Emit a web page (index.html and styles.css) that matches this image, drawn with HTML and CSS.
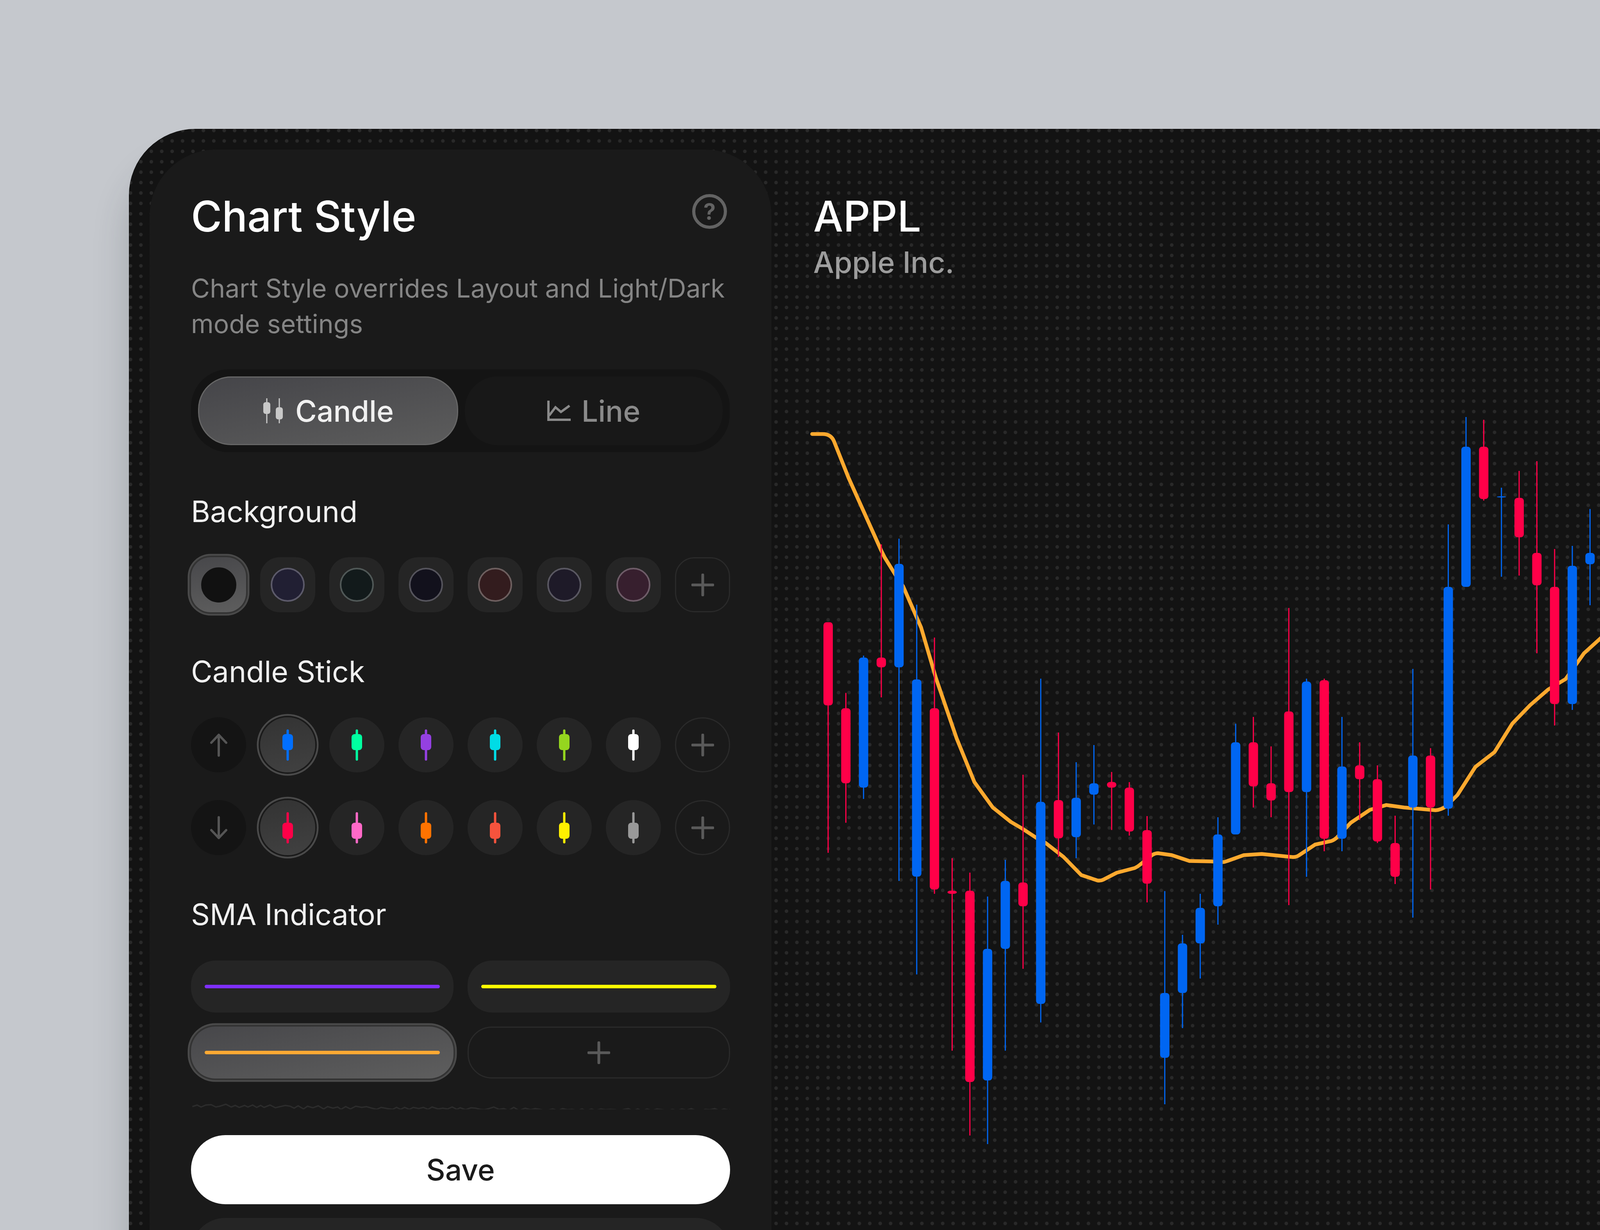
FILE: index.html
```html
<!DOCTYPE html>
<html lang="en">
<head>
<meta charset="utf-8">
<title>Chart Style</title>
<link rel="stylesheet" href="styles.css">
</head>
<body>
<div class="page">
<main class="window">
  <svg class="chart" viewBox="330 330 3870 2820" aria-hidden="true">
    <path class="sma" d="M2079 1111.5H2106C2120 1111.5 2130 1118 2135 1130L2172 1223L2256 1410L2265 1428L2291 1470L2312 1501.6L2358 1607L2396 1736.6L2449 1891L2494.5 2003L2541.6 2068L2588 2105L2617 2122L2652 2145L2677 2159L2722.6 2194.5L2768 2241L2810 2255Q2818 2256 2824 2253L2859 2235L2905 2223Q2912 2220 2919 2214L2950.5 2189Q2958 2185 2964.6 2185L2999.7 2190L3045 2205L3100 2206L3128 2208Q3135 2208 3142 2205L3184 2190L3230 2187L3310 2195Q3318 2195 3324.5 2191L3366.6 2163L3408.7 2153.6Q3416 2151 3422.7 2144.6L3458 2107L3507 2074L3549 2061.6L3594.6 2068L3675 2075Q3690 2074 3703 2064L3731 2036L3777 1964L3826 1926L3871.6 1853L3917 1806L3963 1766L4008 1739L4038 1697L4055 1673L4097 1635L4137 1597Q4146 1589 4155 1588L4186 1590Q4194 1592 4200 1598"/>
    <path class="wick-dn" d="M2120 1806V2184M2165.4 1774.5V2107M2256.1 1394V1786M2392.2 1632.8V2289M2437.5 2197.7V2690.7M2482.9 2234.7V2908M2619 1984V2481M2709.7 1876V2194.5M2845.8 1977V2125.6M2891.1 2003V2140M2936.5 2090V2311M3208.6 1836V2068M3254 1911.6V2093M3299.4 1557V2318M3390.1 1738V2180M3480.8 1901V2100M3526.2 1960V2159M3571.5 2089V2264M3662.2 1916V2278M3798.3 1075V1282M3889 1206V1474M3934.4 1181V1673M3979.8 1406V1858M4115.8 1402V1550M4161.2 1445V1688"/>
    <path class="wick-up" d="M2210.7 1679V2046M2301.4 1379.5V2256M2346.8 1548.6V2495.5M2528.2 2296V2930M2573.6 2202V2690.7M2664.3 1738V2618.6M2755 1952V2198M2800.4 1908V2111.6M2981.8 2282V2828M3027.2 2394V2633M3072.6 2289V2506M3117.9 2093V2368M3163.3 1853.6V1901M3344.7 1738V2245.5M3435.4 1836V2180M3616.9 1713V2350M3707.6 1343V2089M3753 1068V1144M3843.7 1249V1477M4025.1 1398V1818M4070.5 1303.6V1550"/>
    <g class="bodies-dn">
      <rect x="2108" y="1593.5" height="213"/><rect x="2153.4" y="1813.7" height="192.3"/><rect x="2244.1" y="1684" height="25"/><rect x="2380.2" y="1813.7" height="464.3"/><rect x="2425.5" y="2281" height="8"/><rect x="2470.9" y="2281" height="490"/><rect x="2607" y="2260" height="61"/><rect x="2697.7" y="2049" height="98"/><rect x="2833.8" y="2002.5" height="14.5"/><rect x="2879.1" y="2017" height="112.5"/><rect x="2924.5" y="2126" height="137"/><rect x="3196.6" y="1901" height="113"/><rect x="3242" y="2006" height="44"/><rect x="3287.4" y="1822" height="206.6"/><rect x="3378.1" y="1742" height="406"/><rect x="3468.8" y="1960" height="35.5"/><rect x="3514.2" y="1995.5" height="159.5"/><rect x="3559.5" y="2159" height="86.5"/><rect x="3650.2" y="1935" height="133"/><rect x="3786.3" y="1144" height="134"/><rect x="3877" y="1275" height="101"/><rect x="3922.4" y="1416" height="83"/><rect x="3967.8" y="1503" height="300"/><rect x="4103.8" y="1416" height="76"/><rect x="4149.2" y="1488" height="40"/><rect x="4194.6" y="1529" height="85"/>
    </g>
    <g class="bodies-up">
      <rect x="2198.7" y="1684" height="333"/><rect x="2289.4" y="1444" height="265"/><rect x="2334.8" y="1740" height="505"/><rect x="2516.2" y="2430" height="337"/><rect x="2561.6" y="2256" height="174"/><rect x="2652.3" y="2053.6" height="517.4"/><rect x="2743" y="2043" height="101"/><rect x="2788.4" y="2006" height="29"/><rect x="2969.8" y="2543" height="166"/><rect x="3015.2" y="2416" height="127"/><rect x="3060.6" y="2325" height="91"/><rect x="3105.9" y="2137" height="184"/><rect x="3151.3" y="1901" height="236"/><rect x="3332.7" y="1745.5" height="283"/><rect x="3423.4" y="1963" height="185"/><rect x="3604.9" y="1935" height="133"/><rect x="3695.6" y="1503" height="568"/><rect x="3741" y="1144" height="359"/><rect x="3831.7" y="1271" height="3"/><rect x="4013.1" y="1449" height="354"/><rect x="4058.5" y="1416" height="29"/>
    </g>
  </svg>

  <section class="panel">
    <header class="panel-head">
      <h1 class="title">Chart Style</h1>
      <span class="help">?</span>
    </header>
    <p class="desc">Chart Style overrides Layout and Light/Dark mode settings</p>

    <div class="segment">
      <div class="seg seg-on">
        <svg class="seg-candle" viewBox="0 0 56 64"><path d="M11 0V64M43 0V64"/><rect x="2" y="10" width="18" height="30" rx="6"/><rect x="34" y="23" width="18" height="31" rx="6"/></svg>
        <span>Candle</span>
      </div>
      <div class="seg seg-off">
        <svg class="seg-line" viewBox="0 0 60 52"><path d="M3 0V49H60M5 38L21 17L35 29L57 13"/></svg>
        <span>Line</span>
      </div>
    </div>

    <h2 class="label">Background</h2>
    <div class="row row-first">
      <div class="tile rounded selected-bg"><span class="swatch s0"></span></div>
      <div class="tile rounded"><span class="swatch s1"></span></div>
      <div class="tile rounded"><span class="swatch s2"></span></div>
      <div class="tile rounded"><span class="swatch s3"></span></div>
      <div class="tile rounded"><span class="swatch s4"></span></div>
      <div class="tile rounded"><span class="swatch s5"></span></div>
      <div class="tile rounded"><span class="swatch s6"></span></div>
      <div class="tile rounded add"><svg class="plus" viewBox="0 0 58 58"><path d="M29 3V55M3 29H55"/></svg></div>
    </div>

    <h2 class="label">Candle Stick</h2>
    <div class="row row-first">
      <div class="tile round dark"><svg class="arrow" viewBox="0 0 44 60"><path d="M22 4V57M3 24L22 4L41 24"/></svg></div>
      <div class="tile round selected-c"><svg class="stick c-blue" viewBox="0 0 27 80"><rect x="10.5" width="6" height="80" rx="3"/><rect y="12" width="27" height="41" rx="8"/></svg></div>
      <div class="tile round"><svg class="stick c-mint" viewBox="0 0 27 80"><rect x="10.5" width="6" height="80" rx="3"/><rect y="12" width="27" height="41" rx="8"/></svg></div>
      <div class="tile round"><svg class="stick c-violet" viewBox="0 0 27 80"><rect x="10.5" width="6" height="80" rx="3"/><rect y="12" width="27" height="41" rx="8"/></svg></div>
      <div class="tile round"><svg class="stick c-cyan" viewBox="0 0 27 80"><rect x="10.5" width="6" height="80" rx="3"/><rect y="12" width="27" height="41" rx="8"/></svg></div>
      <div class="tile round"><svg class="stick c-lime" viewBox="0 0 27 80"><rect x="10.5" width="6" height="80" rx="3"/><rect y="12" width="27" height="41" rx="8"/></svg></div>
      <div class="tile round"><svg class="stick c-white" viewBox="0 0 27 80"><rect x="10.5" width="6" height="80" rx="3"/><rect y="12" width="27" height="41" rx="8"/></svg></div>
      <div class="tile round add"><svg class="plus" viewBox="0 0 58 58"><path d="M29 3V55M3 29H55"/></svg></div>
    </div>
    <div class="row row-next">
      <div class="tile round dark"><svg class="arrow" viewBox="0 0 44 60"><path d="M22 3V56M3 36L22 56L41 36"/></svg></div>
      <div class="tile round selected-c"><svg class="stick c-red" viewBox="0 0 27 80"><rect x="10.5" width="6" height="80" rx="3"/><rect y="27" width="27" height="41" rx="8"/></svg></div>
      <div class="tile round"><svg class="stick c-pink" viewBox="0 0 27 80"><rect x="10.5" width="6" height="80" rx="3"/><rect y="27" width="27" height="41" rx="8"/></svg></div>
      <div class="tile round"><svg class="stick c-orange" viewBox="0 0 27 80"><rect x="10.5" width="6" height="80" rx="3"/><rect y="27" width="27" height="41" rx="8"/></svg></div>
      <div class="tile round"><svg class="stick c-coral" viewBox="0 0 27 80"><rect x="10.5" width="6" height="80" rx="3"/><rect y="27" width="27" height="41" rx="8"/></svg></div>
      <div class="tile round"><svg class="stick c-yellow" viewBox="0 0 27 80"><rect x="10.5" width="6" height="80" rx="3"/><rect y="27" width="27" height="41" rx="8"/></svg></div>
      <div class="tile round"><svg class="stick c-gray" viewBox="0 0 27 80"><rect x="10.5" width="6" height="80" rx="3"/><rect y="27" width="27" height="41" rx="8"/></svg></div>
      <div class="tile round add"><svg class="plus" viewBox="0 0 58 58"><path d="M29 3V55M3 29H55"/></svg></div>
    </div>

    <h2 class="label">SMA Indicator</h2>
    <div class="sma-grid">
      <div class="sma-tile"><span class="sma-line l-violet"></span></div>
      <div class="sma-tile"><span class="sma-line l-yellow"></span></div>
      <div class="sma-tile sma-on"><span class="sma-line l-orange"></span></div>
      <div class="sma-tile sma-add"><svg class="plus" viewBox="0 0 58 58"><path d="M29 3V55M3 29H55"/></svg></div>
    </div>

    <svg class="divider" viewBox="0 0 805 16" preserveAspectRatio="none" aria-hidden="true"><path vector-effect="non-scaling-stroke" d="M2 9l7-4 6 5 7-5 8-1 7 6 6-2 9-5 8 7 6-4 6 5 8-5 5 4 7-5 6 6 6-5 5 5 9-6 8 7 7-3 8-3 7 2 6 5 6-6 8 8 6-7 8 4 8-5 8 8 6-6 8 4 7-3 5 6 7-7 7 6 8-7 9 3 7-2 8 4 7 3 7-5 9 3 8 2 6-5 6 5 6-5 7 5 6-5 8 3 7-3 7 5 6-6 9 5 7-2 7 2 7-5 7 6 5-4 8 5 8-5 7 1 7 3 6 1 7-3 7-4 8 6 7-2 7 5 8-8 8 8 9-6 8 4 7-3 7 2 5 2 7 0 7-3 8 4 7-5 7 3 7-1 8 3 7-4 6 5 8-5 6 4 8-4 7 2 7-1 8 1 6 3 7-4 6-2 7 6 7-5 7 5 7-5 7 4 8-4 8 2 8 2 7-3 7 3 7-4 7 3 7-4 7 5 7 1 7-4 7 1 7-3 7 5 7-4 7 3 7-5 7 6 7 0 7-2"/></svg>

    <button class="btn btn-save" type="button">Save</button>
    <div class="btn-next"></div>
  </section>

  <section class="stock">
    <h2 class="ticker">APPL</h2>
    <p class="company">Apple Inc.</p>
  </section>
</main>
</div>
</body>
</html>
```
FILE: styles.css
```css
* { box-sizing: border-box; }
html, body { margin: 0; padding: 0; }
body { font-family: "Inter", "Liberation Sans", sans-serif; background: #c5c8cd; }
.page { width: 4200px; height: 3150px; padding: 330px 0 0 330px; overflow: hidden; background: #c5c8cd; }
.window {
  position: relative; display: flex; width: 3870px; height: 3000px; padding: 53px 0 0 53px;
  border-radius: 170px 0 0 0; background-color: #131313;
  background-image: radial-gradient(circle, #292929 4.2px, transparent 4.9px);
  background-size: 26.667px 26.667px; background-position: 17.4px 17.6px;
  box-shadow: 0 90px 90px rgba(40, 50, 60, .22);
}
.chart { position: absolute; left: 0; top: 0; width: 3870px; height: 2820px; }
.sma { fill: none; stroke: #ffa92e; stroke-width: 9.5; stroke-linecap: round; stroke-linejoin: round; }
.wick-dn, .wick-up { fill: none; stroke-width: 3; }
.wick-dn { stroke: #ff0048; }
.wick-up { stroke: #0066f2; }
.bodies-dn { fill: #ff0048; }
.bodies-up { fill: #0066f2; }
.bodies-dn rect, .bodies-up rect { width: 24px; rx: 8px; }

.panel {
  position: relative; flex: none; width: 1592px; height: 2947px; padding: 106px 106px 0 106px;
  background: #1a1a1a; border-radius: 170px 170px 0 0;
}
.panel-head { display: flex; justify-content: space-between; align-items: flex-start; }
.title { margin: 0; font-size: 108px; line-height: 130px; font-weight: 500; color: #fff; }
.help {
  width: 89px; height: 89px; margin: 8px 8px 0 0; border: 8px solid #636363; border-radius: 50%;
  display: flex; align-items: center; justify-content: center;
  font-size: 56px; font-weight: 700; color: #636363; line-height: 1;
}
.desc { margin: 74px 0 0; font-size: 66px; line-height: 91px; color: #858585; }

.segment {
  display: flex; gap: 17px; height: 212px; margin-top: 71px; padding: 18px 18px; width: 1379px;
  background: #141414; border-radius: 96px;
}
.seg { flex: 1; display: flex; align-items: center; justify-content: center; gap: 28px; border-radius: 84px; font-size: 75px; font-weight: 500; }
.seg-on { color: #f0f0f0; background: linear-gradient(170deg, #454549, #5c5c5c); border: 3px solid #666; }
.seg-off { color: #8a8a8a; background: #181818; }
.seg-candle { width: 56px; height: 64px; }
.seg-candle path { stroke: #c8c8c8; stroke-width: 3; fill: none; }
.seg-candle rect { fill: #c8c8c8; }
.seg-line { width: 60px; height: 52px; }
.seg-line path { stroke: #8a8a8a; stroke-width: 6; fill: none; }

.label { margin: 102px 0 0; font-size: 75px; line-height: 100px; font-weight: 400; color: #f0f0f0; }
.row { display: flex; justify-content: space-between; }
.row-first { margin-top: 67px; }
.row-next { margin-top: 71px; }
.tile { flex: none; width: 141px; height: 141px; display: flex; align-items: center; justify-content: center; background: #252525; }
.rounded { border-radius: 50px; }
.round { border-radius: 50%; }
.dark { background: #141414; }
.add { background: transparent; border: 3px solid #2a2a2a; }
.selected-bg { background: linear-gradient(170deg, #47474a, #5e5e5e); box-shadow: 0 0 0 4px #333, 0 0 0 8.5px #4a4a4a; }
.selected-c { background: linear-gradient(170deg, #333, #414141); box-shadow: 0 0 0 4px #1a1a1a, 0 0 0 8.5px #4a4a4a; }
.swatch { width: 87px; height: 87px; border-radius: 50%; border: 4px solid; }
.s0 { width: 90px; height: 90px; background: #111; border-color: #111; }
.s1 { background: #211f33; border-color: #5c5a6a; }
.s2 { background: #121a1b; border-color: #505857; }
.s3 { background: #12111c; border-color: #55545c; }
.s4 { background: #331c1e; border-color: #6d5f5f; }
.s5 { background: #1e1a28; border-color: #5a5862; }
.s6 { background: #371f2e; border-color: #6e5c68; }
.plus { width: 58px; height: 58px; }
.plus path { stroke: #5a5a5a; stroke-width: 7; stroke-linecap: round; fill: none; }
.arrow { width: 44px; height: 60px; }
.arrow path { stroke: #555; stroke-width: 6; stroke-linecap: round; stroke-linejoin: round; fill: none; }
.stick { width: 27px; height: 80px; }
.c-blue { fill: #006fff; } .c-mint { fill: #00ffa0; } .c-violet { fill: #9440e2; } .c-cyan { fill: #00dce6; }
.c-lime { fill: #95d61f; } .c-white { fill: #fff; } .c-red { fill: #ff0048; } .c-pink { fill: #ff69c8; }
.c-orange { fill: #ff7300; } .c-coral { fill: #f5533d; } .c-yellow { fill: #fff000; } .c-gray { fill: #999; }

.sma-grid { display: grid; grid-template-columns: 1fr 1fr; gap: 36px; margin-top: 68px; }
.sma-tile { height: 133px; padding: 0 35px; display: flex; align-items: center; justify-content: center; background: #252525; border-radius: 62px; }
.sma-on { background: linear-gradient(170deg, #47474a, #5e5e5e); box-shadow: 0 0 0 4px #333, 0 0 0 8.5px #4a4a4a; }
.sma-add { background: transparent; border: 3px solid #2a2a2a; }
.sma-line { display: block; width: 100%; height: 9px; border-radius: 5px; }
.l-violet { background: #7f2fff; } .l-yellow { background: #ffff00; } .l-orange { background: #ffa933; }

.divider { display: block; width: 100%; height: 16px; margin-top: 63px; }
.divider path { fill: none; stroke: #2c2c2c; stroke-width: 3.5; }
.btn { display: block; width: 100%; border: 0; font-family: inherit; }
.btn-save { height: 177px; margin-top: 66px; background: #fff; border-radius: 88px; color: #1a1a1a; font-size: 75px; font-weight: 500; }
.btn-next { height: 177px; margin-top: 35px; background: #252525; border-radius: 88px; }

.stock { position: relative; padding: 106px 0 0 107px; }
.ticker { margin: 0; font-size: 108px; line-height: 130px; font-weight: 500; color: #fff; }
.company { margin: 3px 0 0; font-size: 75px; line-height: 100px; font-weight: 500; color: rgba(255, 255, 255, .58); }
```
